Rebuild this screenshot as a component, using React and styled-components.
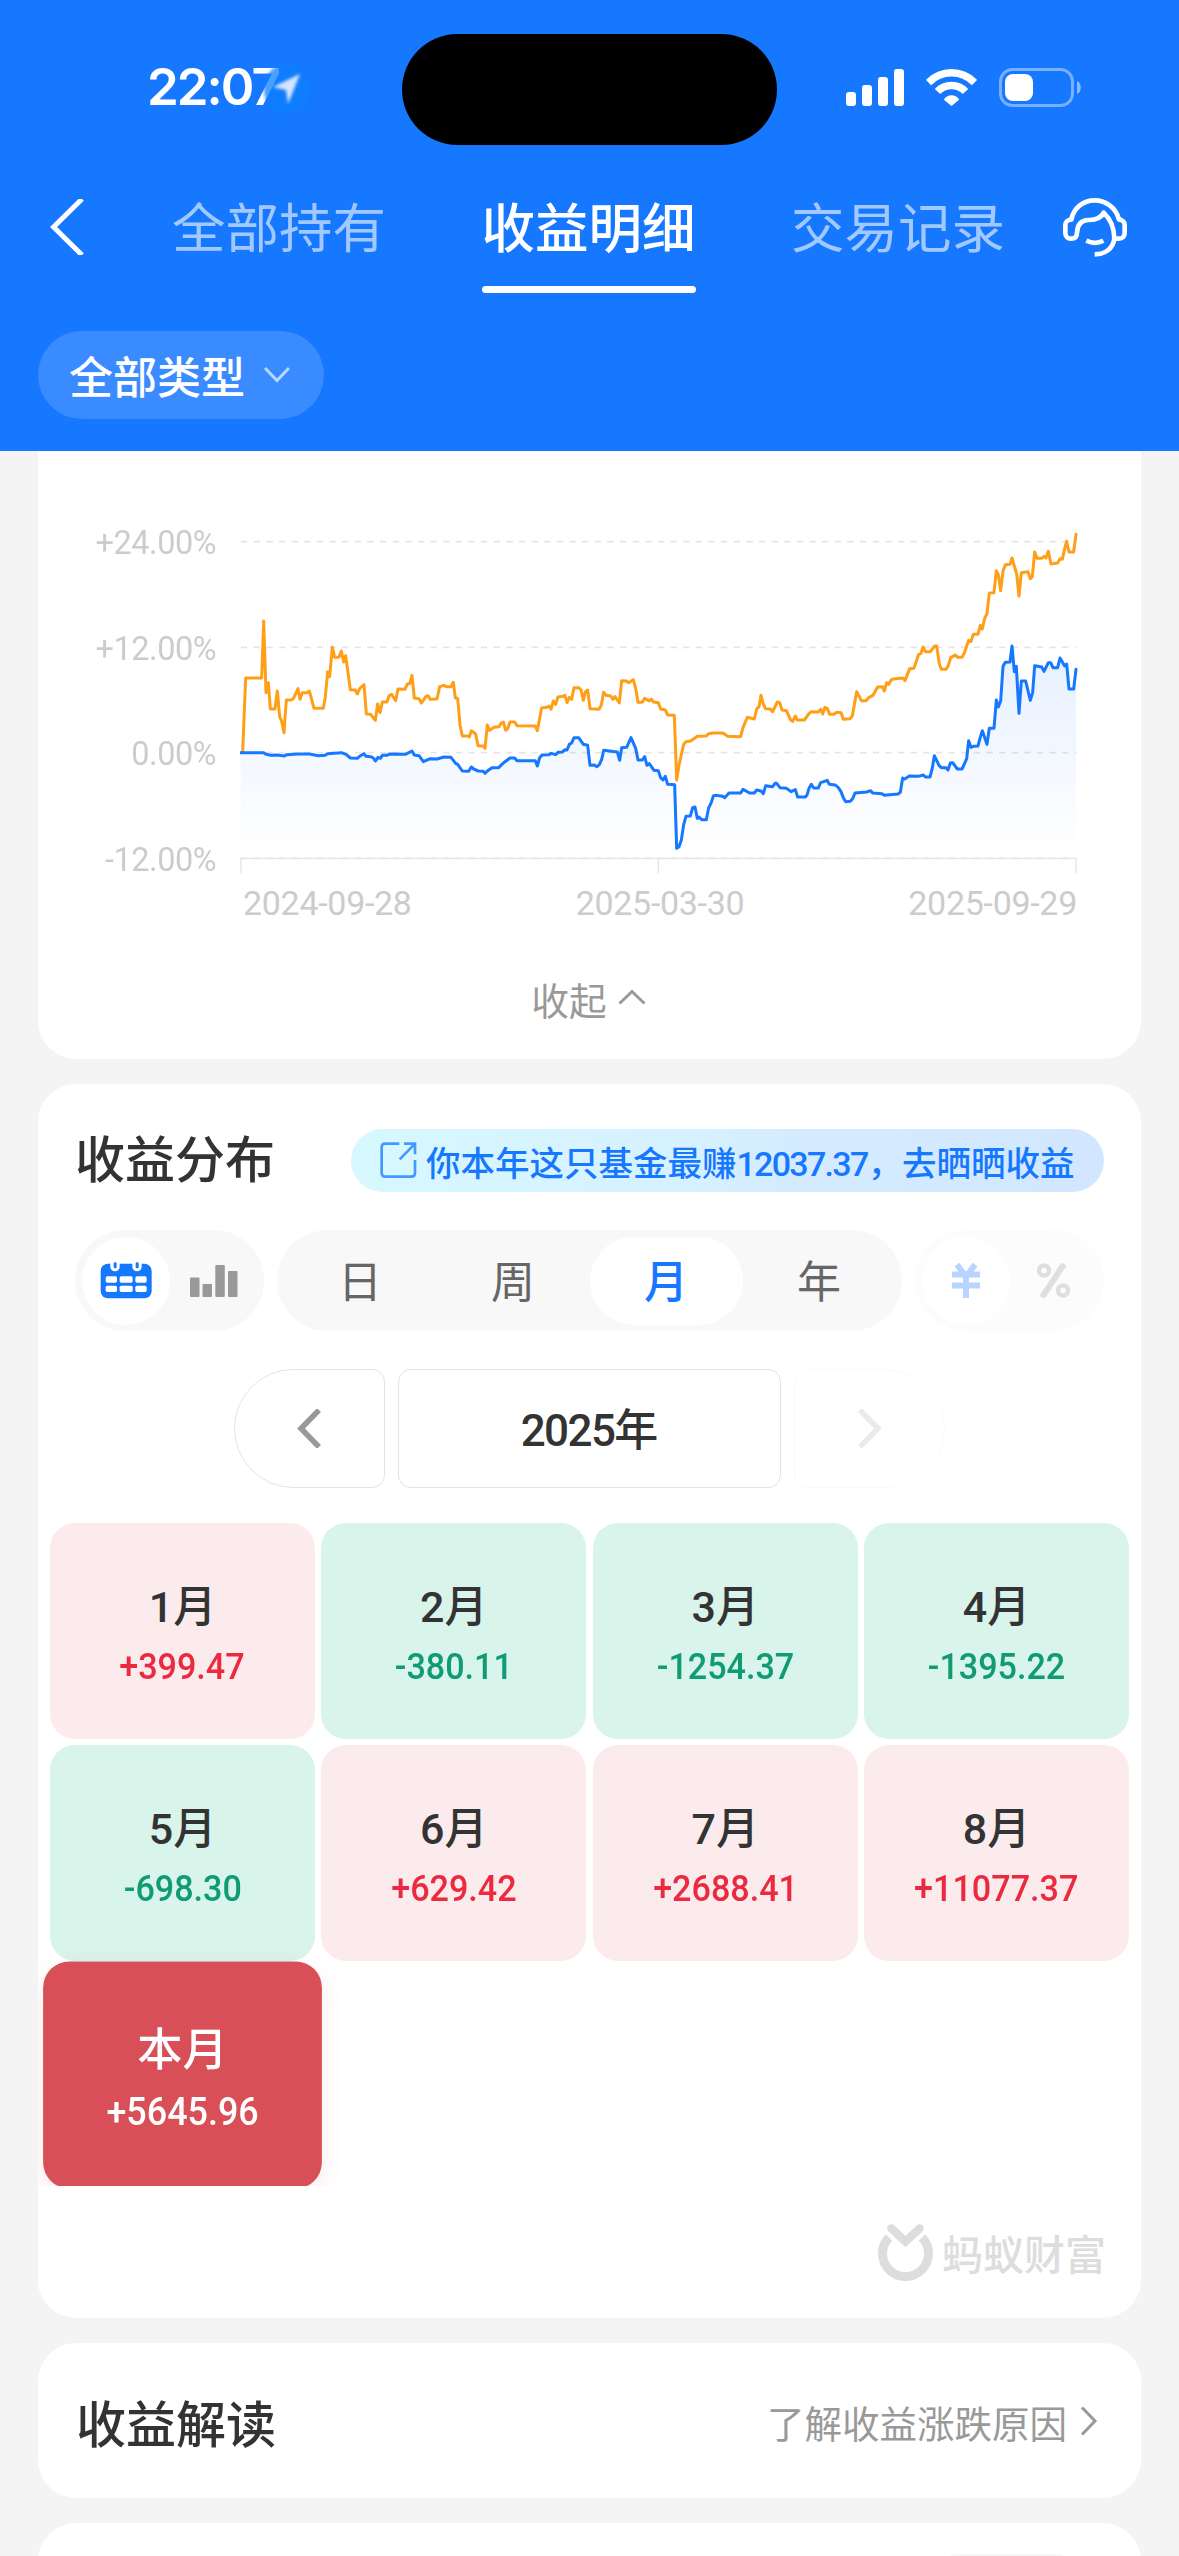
import React, { useState } from "react";
import styled, { createGlobalStyle, css } from "styled-components";

const GlobalStyle = createGlobalStyle`
  * {
    box-sizing: border-box;
  }

  body {
    margin: 0;
    background: #f4f4f4;
    color: #333333;
    font-family: "Noto Sans CJK SC", sans-serif;
  }

  button {
    margin: 0;
    padding: 0;
    border: 0;
    background: none;
    color: inherit;
    font: inherit;
  }

  svg {
    display: block;
    flex-shrink: 0;
  }
`;

const tabs = ["全部持有", "收益明细", "交易记录"];
const periods = ["日", "周", "月", "年"];
const rates = ["+24.00%", "+12.00%", "0.00%", "-12.00%"];
const dates = ["2024-09-28", "2025-03-30", "2025-09-29"];

const months = [
  { name: "1", value: "+399.47" },
  { name: "2", value: "-380.11" },
  { name: "3", value: "-1254.37" },
  { name: "4", value: "-1395.22" },
  { name: "5", value: "-698.30" },
  { name: "6", value: "+629.42" },
  { name: "7", value: "+2688.41" },
  { name: "8", value: "+11077.37" },
  { name: "本", value: "+5645.96", current: true },
];

const indexLine =
  "8,695 17,474 65,474 71,303 78,518 85,488 91,567 105,567 112,513 119,590 125,604 132,638 139,540 153,540 160,536 174,506 180,538 187,518 202,518 208,513 222,565 250,565 256,530 263,455 269,470 277,382 284,412 297,412 304,393 311,426 317,407 331,509 346,510 352,522 359,506 372,494 379,582 392,583 406,601 413,552 420,578 427,546 441,546 448,526 455,523 467,542 474,507 495,508 502,492 509,491 516,466 523,534 537,536 544,549 551,540 557,530 564,527 571,538 591,537 599,500 612,496 619,500 633,500 640,487 646,534 653,535 660,615 667,648 " +
  "686,648 688,651 694,632 707,642 714,677 731,678 735,685 742,615 749,631 762,622 777,620 784,609 790,606 797,631 803,626 810,606 824,606 831,617 886,618 892,632 905,564 920,562 927,558 933,568 940,543 947,553 954,531 969,529 975,526 981,548 988,532 995,538 1002,503 1016,503 1023,510 1030,541 1036,516 1043,510 1050,566 1077,568 1084,555 1091,517 1098,526 1112,528 1119,538 1125,530 1138,549 1145,482 1159,483 1166,488 1180,479 1187,505 1194,547 1207,547 1214,535 1228,543 1234,537 1240,546 1255,548 1262,567 1276,570 1283,585 1303,586 1310,780 1317,735 1331,673 1338,665 1352,663 1372,649 1399,648 1406,641 1420,639 1449,639 1463,649 1502,650 1509,623 1522,592 1543,597 1550,567 1557,560 1563,526 1570,553 1577,566 1591,567 1598,575 1612,546 " +
  "1619,548 1626,570 1639,572 1652,600 1658,604 1666,588 1672,600 1693,600 1707,581 1714,575 1735,576 1742,568 1748,582 1755,562 1762,566 1769,583 1782,583 1789,577 1803,578 1810,598 1830,596 1837,588 1850,515 1864,542 1878,542 1886,533 1899,526 1913,501 1927,500 1933,513 1940,488 1946,493 1954,479 1961,477 1989,474 1995,482 2009,446 2022,445 2036,403 2043,401 2049,381 2056,395 2071,395 2084,378 2090,378 2098,431 2104,448 2118,448 2125,437 2132,413 2146,405 2153,412 2166,412 2173,399 2186,361 2193,364 2200,343 2214,343 2221,316 2227,327 2234,295 2241,281 2248,219 2262,218 2269,152 2275,164 2282,212 2289,153 2296,134 2310,133 2316,114 2330,162 2337,228 2344,158 2364,155 2371,176 2377,170 2384,96 2391,115 2405,115 2412,109 2418,114 2425,94 2433,132 2453,129 2460,116 2467,118 2474,86 2480,64 2487,96 2501,96 2508,43";

const profitLine =
  "1,698 71,698 78,703 92,706 112,705 133,708 140,704 174,702 208,702 236,707 255,706 263,701 304,698 318,703 331,714 352,715 359,709 372,701 378,709 392,710 400,714 406,723 414,712 421,715 427,706 441,706 448,702 496,703 516,693 523,705 537,707 550,725 571,716 591,717 612,711 633,712 647,730 653,733 667,753 " +
  "686,754 694,741 701,747 715,753 730,754 735,760 742,753 756,743 776,743 790,729 810,714 824,714 831,722 886,722 892,738 899,713 906,705 927,704 934,700 947,704 954,697 967,696 975,689 981,690 988,673 995,669 1002,653 1016,653 1030,673 1043,676 1050,736 1063,735 1071,740 1078,734 1085,718 1091,691 1132,696 1139,721 1145,683 1160,682 1173,653 1187,685 1194,720 1207,720 1214,710 1221,736 1228,731 1242,751 1255,752 1262,773 1269,780 1276,769 1283,793 1304,794 1310,985 1317,980 1324,960 1331,914 1338,889 1351,888 1358,863 1365,861 1372,895 1377,891 1385,899 1399,899 1406,863 1413,850 1420,828 1426,826 1448,829 1454,833 1467,819 1502,819 1509,808 1529,819 1543,819 1550,810 1563,813 1570,821 1577,797 1598,800 1605,790 1610,790 1620,803 " +
  "1640,805 1653,815 1666,809 1673,831 1696,831 1701,825 1707,805 1714,793 1721,804 1735,804 1742,788 1762,781 1768,793 1786,795 1795,803 1803,815 1810,833 1817,845 1831,844 1838,836 1845,819 1880,816 1892,812 1898,819 1926,821 1933,826 1974,822 1981,817 1988,774 1994,777 2008,768 2035,769 2050,765 2056,771 2070,771 2077,744 2083,707 2097,736 2104,743 2118,743 2124,750 2131,729 2138,728 2152,747 2166,747 2173,732 2180,716 2186,662 2193,682 2200,679 2214,678 2221,651 2227,632 2241,673 2248,625 2262,625 2269,540 2275,561 2282,543 2289,439 2296,427 2310,426 2316,378 2323,455 2329,439 2337,580 2344,483 2357,483 2371,541 2378,518 2384,437 2405,441 2412,454 2425,428 2432,428 2439,443 2453,443 2460,414 2474,438 2480,432 2487,507 2501,507 2508,448";

function StatusBar() {
  return (
    <StatusRow>
      <Clock>
        22:07
        <LocationBadge>
          <svg width="28" height="32" viewBox="0 0 28 32">
            <path d="M27 1 15 31 13 17 0 14Z" fill="#d5e5ff" />
          </svg>
        </LocationBadge>
      </Clock>
      <Island />
      <StatusIcons>
        <svg width="58" height="37" viewBox="0 0 58 37" fill="#fff">
          <rect x="0" y="23" width="10" height="14" rx="3" />
          <rect x="16" y="16" width="10" height="21" rx="3" />
          <rect x="32" y="8" width="10" height="29" rx="3" />
          <rect x="48" y="0" width="10" height="37" rx="3" />
        </svg>
        <svg width="51" height="37" viewBox="0 0 51 37">
          <g fill="none" stroke="#fff" strokeWidth="7.5">
            <path d="M2.500 13.500C15.500 .6 35.500 .6 48.500 13.500" />
            <path d="M11.500 22.500C19 14.500 32 14.500 39.500 22.500" />
          </g>
          <path
            d="M18.500 29.500C22 25 29 25 32.500 29.500C33 30.200 32.900 30.700 32.400 31.200L25.500 37L18.600 31.200C18.100 30.700 18 30.200 18.500 29.500Z"
            fill="#fff"
          />
        </svg>
        <svg width="83" height="40" viewBox="0 0 83 40">
          <rect
            x="1.5"
            y="1.5"
            width="72"
            height="36"
            rx="12"
            fill="none"
            stroke="#fff"
            strokeOpacity=".42"
            strokeWidth="3"
          />
          <rect x="6" y="6" width="28" height="27" rx="8" fill="#fff" />
          <path d="M78 13C83 15 83 24 78 26Z" fill="#fff" fillOpacity=".5" />
        </svg>
      </StatusIcons>
    </StatusRow>
  );
}

function ServiceIcon() {
  return (
    <svg width="100" height="95" viewBox="0 0 300 285">
      <g
        fill="none"
        stroke="#fff"
        strokeWidth="14"
        strokeLinecap="round"
        strokeLinejoin="round"
      >
        <path d="M79 118C86 84 114 61 149 61C184 61 213 84 222 118" />
        <path d="M79 118C66 121 61 125 61 135V158C61 170 68 176 78 176C90 176 96 170 96 158C97 134 107 121 130 120C153 121 168 113 176 98C196 117 207 138 208 174C211 177 216 176 222 176C233 176 239 169 239 158V135C239 125 234 121 222 118" />
        <path d="M208 176C204 206 181 223 149 223" strokeLinecap="butt" />
        <path d="M124 182C140 190 160 190 175 182" strokeLinecap="butt" />
      </g>
    </svg>
  );
}

function Header() {
  const [tab, setTab] = useState(1);

  return (
    <HeaderWrap>
      <StatusBar />
      <NavBar>
        <svg width="34" height="56" viewBox="0 0 34 56">
          <path d="M32 0 3.500 28 32 56" fill="none" stroke="#fff" strokeWidth="5" />
        </svg>
        <TabList>
          {tabs.map((name, index) => (
            <Tab key={name} $active={tab === index} onClick={() => setTab(index)}>
              {name}
            </Tab>
          ))}
        </TabList>
        <ServiceIcon />
      </NavBar>
      <TypeFilter>
        全部类型
        <svg width="26" height="18" viewBox="0 0 26 18">
          <path d="M1 2 13 14.500 25 2" fill="none" stroke="#b9d6ff" strokeWidth="3" />
        </svg>
      </TypeFilter>
    </HeaderWrap>
  );
}

function ProfitChart() {
  return (
    <ChartCard>
      <ChartBody>
        <RateAxis>
          {rates.map((rate) => (
            <li key={rate}>{rate}</li>
          ))}
        </RateAxis>
        <Plot>
          <svg width="839" height="355" viewBox="0 0 2517 1065">
            <defs>
              <linearGradient
                id="profitArea"
                gradientUnits="userSpaceOnUse"
                x1="0"
                y1="378"
                x2="0"
                y2="1000"
              >
                <stop offset="0" stopColor="#1677ff" stopOpacity=".11" />
                <stop offset=".55" stopColor="#1677ff" stopOpacity=".05" />
                <stop offset="1" stopColor="#1677ff" stopOpacity="0" />
              </linearGradient>
            </defs>
            <g fill="none" stroke="#e5e5e5" strokeWidth="5">
              {[65, 382, 698, 1015].map((y) => (
                <path key={y} d={`M3 ${y}H2508`} strokeDasharray="19 18.9" />
              ))}
              <path d="M3 1060V1015H2508V1060M1255 1015V1060" strokeWidth="4" />
            </g>
            <polygon points={`3,1012 ${profitLine} 2508,1012`} fill="url(#profitArea)" />
            <g fill="none" strokeWidth="9" strokeLinejoin="round" strokeLinecap="round">
              <polyline points={indexLine} stroke="#ff9f18" />
              <polyline points={profitLine} stroke="#1677ff" />
            </g>
          </svg>
          <DateAxis>
            {dates.map((date) => (
              <li key={date}>{date}</li>
            ))}
          </DateAxis>
        </Plot>
      </ChartBody>
      <FoldButton>
        收起
        <svg width="28" height="16" viewBox="0 0 28 16">
          <path d="M1.500 14.500 14 2.500 26.500 14.500" fill="none" stroke="#999" strokeWidth="3" />
        </svg>
      </FoldButton>
    </ChartCard>
  );
}

function CalendarIcon() {
  return (
    <svg width="52" height="37" viewBox="0 0 156 111">
      <rect x="2" y="5" width="153" height="104" rx="22" fill="#1677ff" />
      <g fill="#fff">
        <path d="M31 0H59V14A14 14 0 0 1 31 14Z" />
        <path d="M97 0H125V14A14 14 0 0 1 97 14Z" />
        {[43, 71].map((y) => (
          <React.Fragment key={y}>
            <rect x="17" y={y} width="34" height="19" rx="5" />
            <rect x="59" y={y} width="39" height="19" rx="5" />
            <rect x="106" y={y} width="34" height="19" rx="5" />
          </React.Fragment>
        ))}
      </g>
      <g fill="#1677ff">
        <rect x="41" y="1" width="9" height="18" rx="4" />
        <rect x="107" y="1" width="9" height="18" rx="4" />
      </g>
    </svg>
  );
}

function BarIcon() {
  return (
    <svg width="48" height="32" viewBox="0 0 48 32" fill="#999">
      <rect x="0" y="12.5" width="9.5" height="19.5" rx="1" />
      <rect x="12.5" y="19" width="9.5" height="13" rx="1" />
      <rect x="25.3" y="0" width="9.5" height="32" rx="1" />
      <rect x="38" y="6" width="9.5" height="26" rx="1" />
    </svg>
  );
}

function YuanIcon() {
  return (
    <svg width="28" height="35" viewBox="0 0 28 35">
      <g fill="none" stroke="#1677ff" strokeWidth="6">
        <path d="M5 1.500 14 14 23 1.500" />
        <path d="M0 11.500H28M0 22.500H28M14 11V35" />
      </g>
    </svg>
  );
}

function PercentIcon() {
  return (
    <svg width="33" height="35" viewBox="0 0 33 35">
      <g fill="none" stroke="#999">
        <circle cx="7" cy="7.5" r="5" strokeWidth="4.5" />
        <circle cx="26" cy="27.5" r="5" strokeWidth="4.5" />
        <path d="M27 1 5 34.500" strokeWidth="6" />
      </g>
    </svg>
  );
}

function ProfitCalendar() {
  const [period, setPeriod] = useState("月");

  return (
    <CalendarCard>
      <CardHead>
        <CardTitle>收益分布</CardTitle>
        <ShareLink>
          <svg width="37" height="37" viewBox="0 0 111 111">
            <g fill="none" stroke="#1677ff" strokeOpacity=".75" strokeWidth="8">
              <path d="M58 5H16Q5 5 5 16V94Q5 104 16 104H94Q105 104 105 94V54" />
              <path d="M72 5H105V37M103 7 59 52" />
            </g>
          </svg>
          <span>
            你本年这只基金最赚<em>12037.37</em>，去晒晒收益
          </span>
        </ShareLink>
      </CardHead>

      <Toolbar>
        <Segment>
          <RoundItem $active>
            <CalendarIcon />
          </RoundItem>
          <RoundItem>
            <BarIcon />
          </RoundItem>
        </Segment>
        <Segment $grow>
          {periods.map((name) => (
            <PeriodItem key={name} $active={period === name} onClick={() => setPeriod(name)}>
              {name}
            </PeriodItem>
          ))}
        </Segment>
        <Segment $disabled>
          <RoundItem $active>
            <YuanIcon />
          </RoundItem>
          <RoundItem>
            <PercentIcon />
          </RoundItem>
        </Segment>
      </Toolbar>

      <YearPicker>
        <YearArrow $side="left">
          <svg width="25" height="39" viewBox="0 0 25 39">
            <path d="M22 1 4 19.500 22 38" fill="none" stroke="#999" strokeWidth="5.5" />
          </svg>
        </YearArrow>
        <YearLabel>
          <em>2025</em>年
        </YearLabel>
        <YearArrow $side="right" disabled>
          <svg width="25" height="39" viewBox="0 0 25 39">
            <path d="M3 1 21 19.500 3 38" fill="none" stroke="#999" strokeWidth="5.5" />
          </svg>
        </YearArrow>
      </YearPicker>

      <MonthGrid>
        {months.map(({ name, value, current }) => (
          <MonthCell key={name} $up={value[0] === "+"} $current={current}>
            <MonthName $current={current}>
              <em>{name}</em>月
            </MonthName>
            <MonthValue>{value}</MonthValue>
          </MonthCell>
        ))}
      </MonthGrid>

      <Brand>
        <svg width="55" height="57" viewBox="0 0 55 57">
          <g fill="none" stroke="#ddd">
            <path d="M11 13.500A23 23 0 1 0 44 13.500" strokeWidth="9" />
            <path d="M13.500 4.500 27.500 17.500 41.500 4.500" strokeWidth="8.5" strokeLinecap="round" />
          </g>
        </svg>
        <span>蚂蚁财富</span>
      </Brand>
    </CalendarCard>
  );
}

export default function App() {
  return (
    <Page>
      <GlobalStyle />
      <Header />
      <Content>
        <ProfitChart />
        <ProfitCalendar />
        <ReadCard>
          <CardTitle>收益解读</CardTitle>
          <ReadLink>
            了解收益涨跌原因
            <svg width="18" height="30" viewBox="0 0 18 30">
              <path d="M2 1.500 15 15 2 28.500" fill="none" stroke="#999" strokeWidth="3" />
            </svg>
          </ReadLink>
        </ReadCard>
        <NextCard>
          <NextCardTag />
        </NextCard>
      </Content>
    </Page>
  );
}

const number = css`
  font-family: "Roboto", "Noto Sans CJK SC", sans-serif;
  font-style: normal;
`;

const Page = styled.div`
  width: 1179px;
  height: 2556px;
  overflow: hidden;
  background: #f4f4f4;
`;

const HeaderWrap = styled.header`
  height: 451px;
  background: #1677ff;
  color: #ffffff;
`;

const StatusRow = styled.div`
  display: flex;
  align-items: center;
  height: 177px;
`;

const Clock = styled.div`
  position: relative;
  width: 402px;
  padding: 0 0 3px 147px;
  font: 600 51px/60px "Inter", sans-serif;
  letter-spacing: -2px;
`;

const LocationBadge = styled.i`
  position: absolute;
  left: 264px;
  top: 7px;
  display: flex;
  align-items: center;
  justify-content: center;
  width: 46px;
  height: 50px;
  border-radius: 25px;
  background: rgba(12, 128, 255, 0.75);
  filter: blur(1.5px);
`;

const Island = styled.div`
  width: 375px;
  height: 111px;
  margin-top: 1px;
  border-radius: 56px;
  background: #000000;
`;

const StatusIcons = styled.div`
  display: flex;
  align-items: center;
  gap: 22px;
  padding: 0 0 2px 69px;
`;

const NavBar = styled.nav`
  display: flex;
  align-items: center;
  height: 102px;
  padding: 0 34px 2px 50px;
`;

const TabList = styled.div`
  display: flex;
  justify-content: space-between;
  width: 833px;
  margin: 0 40px 0 88px;
`;

const Tab = styled.button`
  position: relative;
  height: 80px;
  padding-bottom: 4px;
  color: ${({ $active }) => ($active ? "#ffffff" : "rgba(255, 255, 255, 0.6)")};
  font-size: 53.5px;
  font-weight: ${({ $active }) => ($active ? 500 : 400)};
  line-height: 76px;
  white-space: nowrap;

  ${({ $active }) =>
    $active &&
    css`
      &::after {
        content: "";
        position: absolute;
        left: 0;
        right: 0;
        bottom: -26px;
        height: 7px;
        border-radius: 4px;
        background: #ffffff;
      }
    `}
`;

const TypeFilter = styled.button`
  display: flex;
  align-items: center;
  gap: 19px;
  width: 286px;
  height: 88px;
  margin: 52px 0 0 38px;
  padding: 0 0 1px 31px;
  border-radius: 44px;
  background: #3a8bff;
  font-size: 44px;
  font-weight: 500;
`;

const Content = styled.main`
  display: flex;
  flex-direction: column;
  gap: 25px;
  padding: 0 38px;
`;

const Card = styled.section`
  border-radius: 38px;
  background: #ffffff;
`;

const ChartCard = styled(Card)`
  height: 608px;
  padding-top: 39px;
  border-radius: 0 0 38px 38px;
`;

const ChartBody = styled.div`
  display: flex;
  gap: 24px;
`;

const RateAxis = styled.ul`
  width: 178px;
  margin: 0;
  padding: 0;
  color: #cccccc;
  ${number}
  font-size: 34px;
  line-height: 105.5px;
  letter-spacing: -0.5px;
  list-style: none;
  text-align: right;
  transform: scaleX(0.955);
  transform-origin: right;
`;

const Plot = styled.div`
  width: 839px;
  padding-top: 30px;
`;

const DateAxis = styled.ul`
  display: flex;
  justify-content: space-between;
  margin: 8px 0 0;
  padding: 0 2px 0 3px;
  color: #cccccc;
  ${number}
  font-size: 34px;
  line-height: 40px;
  letter-spacing: -0.3px;
  list-style: none;
`;

const FoldButton = styled.button`
  display: flex;
  align-items: center;
  gap: 11px;
  margin: 49px auto 0;
  color: #999999;
  font-size: 37.7px;
  line-height: 54px;
  transform: translateX(-1px);

  svg {
    margin-bottom: 4px;
  }
`;

const CalendarCard = styled(Card)`
  display: flex;
  flex-direction: column;
  height: 1234px;
  padding-top: 45px;
`;

const CardHead = styled.div`
  display: flex;
  align-items: flex-start;
  justify-content: space-between;
  height: 63px;
  padding: 0 37px;
`;

const CardTitle = styled.h2`
  margin: 0;
  font-size: 50px;
  font-weight: 500;
  line-height: 55px;
`;

const ShareLink = styled.button`
  display: flex;
  align-items: center;
  gap: 9px;
  width: 753px;
  height: 63px;
  padding-left: 29px;
  border-radius: 32px;
  background: linear-gradient(100deg, #d7f8ff, #d6f1ff 45%, #d4ebff 60%, #d2e7ff);
  color: #1677ff;
  font-size: 34.5px;
  font-weight: 500;
  white-space: nowrap;

  em {
    ${number}
    font-size: 34px;
    letter-spacing: -1.7px;
  }
`;

const Toolbar = styled.div`
  display: flex;
  gap: 13px;
  margin-top: 38px;
  padding: 0 37px;
`;

const Segment = styled.div`
  display: flex;
  flex: ${({ $grow }) => ($grow ? "1" : "0 0 189px")};
  height: 101px;
  padding: 6.5px;
  border-radius: 51px;
  background: #f8f8f8;
  opacity: ${({ $disabled }) => ($disabled ? 0.3 : 1)};
`;

const RoundItem = styled.button`
  display: flex;
  align-items: center;
  justify-content: center;
  width: 88px;
  height: 88px;
  border-radius: 44px;
  background: ${({ $active }) => ($active ? "#ffffff" : "transparent")};
`;

const PeriodItem = styled.button`
  flex: 1;
  padding-bottom: 4px;
  border-radius: 44px;
  background: ${({ $active }) => ($active ? "#ffffff" : "transparent")};
  color: ${({ $active }) => ($active ? "#1677ff" : "#666666")};
  font-size: 44px;
  font-weight: ${({ $active }) => ($active ? 500 : 400)};
  line-height: 84px;
`;

const YearPicker = styled.div`
  display: flex;
  justify-content: center;
  gap: 13px;
  margin-top: 38px;
`;

const YearArrow = styled.button`
  display: flex;
  align-items: center;
  justify-content: center;
  width: 151px;
  height: 119px;
  border: 1px solid #e3e3e3;
  border-radius: ${({ $side }) =>
    $side === "left" ? "60px 13px 13px 60px" : "13px 60px 60px 13px"};

  &:disabled {
    opacity: 0.2;
  }
`;

const YearLabel = styled.div`
  width: 383px;
  height: 119px;
  border: 1px solid #e3e3e3;
  border-radius: 13px;
  font-size: 44px;
  font-weight: 500;
  line-height: 114px;
  text-align: center;

  em {
    ${number}
    letter-spacing: -1.6px;
  }
`;

const MonthGrid = styled.div`
  display: grid;
  grid-template-columns: repeat(4, 264.8px);
  grid-auto-rows: 216px;
  gap: 6px 6.6px;
  height: 698px;
  padding: 35px 0 0 12px;
  overflow: hidden;
`;

const MonthCell = styled.div`
  display: flex;
  flex-direction: column;
  align-items: center;
  padding-top: 50px;
  border-radius: 25px;
  background: ${({ $up }) => ($up ? "#fbebec" : "#d8f4eb")};
  color: ${({ $up }) => ($up ? "#eb2a3f" : "#0f9b74")};

  ${({ $current }) =>
    $current &&
    css`
      background: #d94f58;
      box-shadow: 0 8px 20px rgba(217, 79, 88, 0.12);
      color: #ffffff;
      transform: scale(1.052);
    `}
`;

const MonthName = styled.div`
  color: ${({ $current }) => ($current ? "#ffffff" : "#333333")};
  font-size: 43px;
  font-weight: 500;
  line-height: 60px;

  em {
    ${number}
  }
`;

const MonthValue = styled.div`
  ${number}
  font-size: 37.5px;
  font-weight: 500;
  line-height: 58px;
  transform: scaleX(0.91);
`;

const Brand = styled.div`
  display: flex;
  align-items: center;
  align-self: flex-end;
  gap: 9px;
  margin: 34px 35px 0 0;
  color: #dddddd;
  font-size: 41px;
  font-weight: 500;
  line-height: 64px;
`;

const ReadCard = styled(Card)`
  display: flex;
  align-items: center;
  justify-content: space-between;
  height: 155px;
  padding: 1px 43px 0 38px;
`;

const ReadLink = styled.button`
  display: flex;
  align-items: center;
  gap: 13px;
  color: #999999;
  font-size: 37.5px;
`;

const NextCard = styled(Card)`
  height: 120px;
  padding-top: 31px;
`;

const NextCardTag = styled.div`
  width: 154px;
  height: 60px;
  margin-left: 892px;
  border-radius: 30px;
  background: #f5f5f5;
`;
